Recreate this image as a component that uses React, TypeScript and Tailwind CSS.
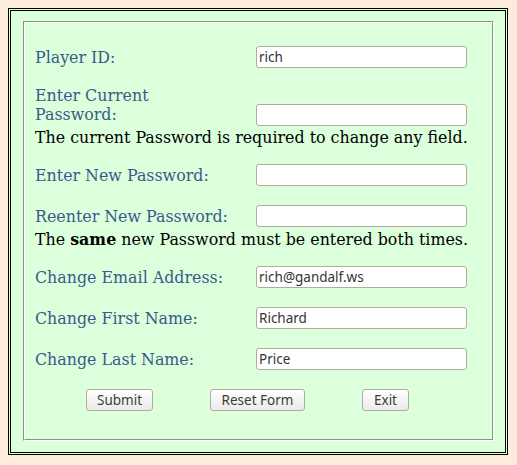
import React from "react";

const serif = "font-['DejaVu_Serif',serif] text-[15.85px] leading-[normal]";
const sans = "font-['Noto_Sans','DejaVu_Sans',sans-serif] leading-[normal]";

interface FieldRowProps {
  label: React.ReactNode;
  value?: string;
  type?: string;
  className?: string;
  alignEnd?: boolean;
}

function FieldRow({ label, value = "", type = "text", className = "", alignEnd }: FieldRowProps) {
  return (
    <div className={`flex pl-[10px] ${alignEnd ? "items-end" : "items-center"} ${className}`}>
      <label className={`w-[221px] shrink-0 text-[#3b5a8c] ${serif}`}>{label}</label>
      <input
        type={type}
        defaultValue={value}
        className={`h-[22px] w-[211px] rounded-[3px] border border-[#b5aa9e] bg-white px-[2px] text-[13.5px] text-[#333] outline-none ${alignEnd ? "-mb-[2px]" : ""} ${sans}`}
      />
    </div>
  );
}

function FormButton({ children, width }: { children: React.ReactNode; width: string }) {
  return (
    <button
      type="button"
      className={`h-[22px] ${width} rounded-[3px] border border-[#b5aa9e] bg-gradient-to-b from-white to-[#ebebeb] text-[13.5px] text-[#3c3c3c] ${sans}`}
    >
      {children}
    </button>
  );
}

export default function App() {
  return (
    <div className="min-h-[465px] bg-[#fdebdc] p-2">
      <div className="h-[447px] w-[500px] border-[3px] border-double border-black bg-[#dcffdc] pl-[12px] pt-[10px]">
        {/* fieldset-style groove border */}
        <div className="h-[420px] w-[471px] border border-t-[#8f8f8f] border-l-[#8f8f8f] border-r-white border-b-white">
          <div className="flex h-full w-full flex-col border border-t-white border-l-white border-r-[#8f8f8f] border-b-[#8f8f8f] pt-[23px]">
            <FieldRow label="Player ID:" value="rich" />
            <FieldRow
              label={
                <>
                  Enter Current
                  <br />
                  Password:
                </>
              }
              type="password"
              alignEnd
              className="mt-[18px]"
            />
            <p className={`mt-[4px] pl-[10px] text-black ${serif}`}>
              The current Password is required to change any field.
            </p>
            <FieldRow label="Enter New Password:" type="password" className="mt-[17px]" />
            <FieldRow label="Reenter New Password:" type="password" className="mt-[19px]" />
            <p className={`mt-[3px] pl-[10px] text-black ${serif}`}>
              The <b>same</b> new Password must be entered both times.
            </p>
            <FieldRow label="Change Email Address:" value="rich@gandalf.ws" className="mt-[17px]" />
            <FieldRow label="Change First Name:" value="Richard" className="mt-[19px]" />
            <FieldRow label="Change Last Name:" value="Price" className="mt-[19px]" />
            <div className="mt-[19px] flex gap-[57px] pl-[61px]">
              <FormButton width="w-[67px]">Submit</FormButton>
              <FormButton width="w-[95px]">Reset Form</FormButton>
              <FormButton width="w-[47px]">Exit</FormButton>
            </div>
          </div>
        </div>
      </div>
    </div>
  );
}
